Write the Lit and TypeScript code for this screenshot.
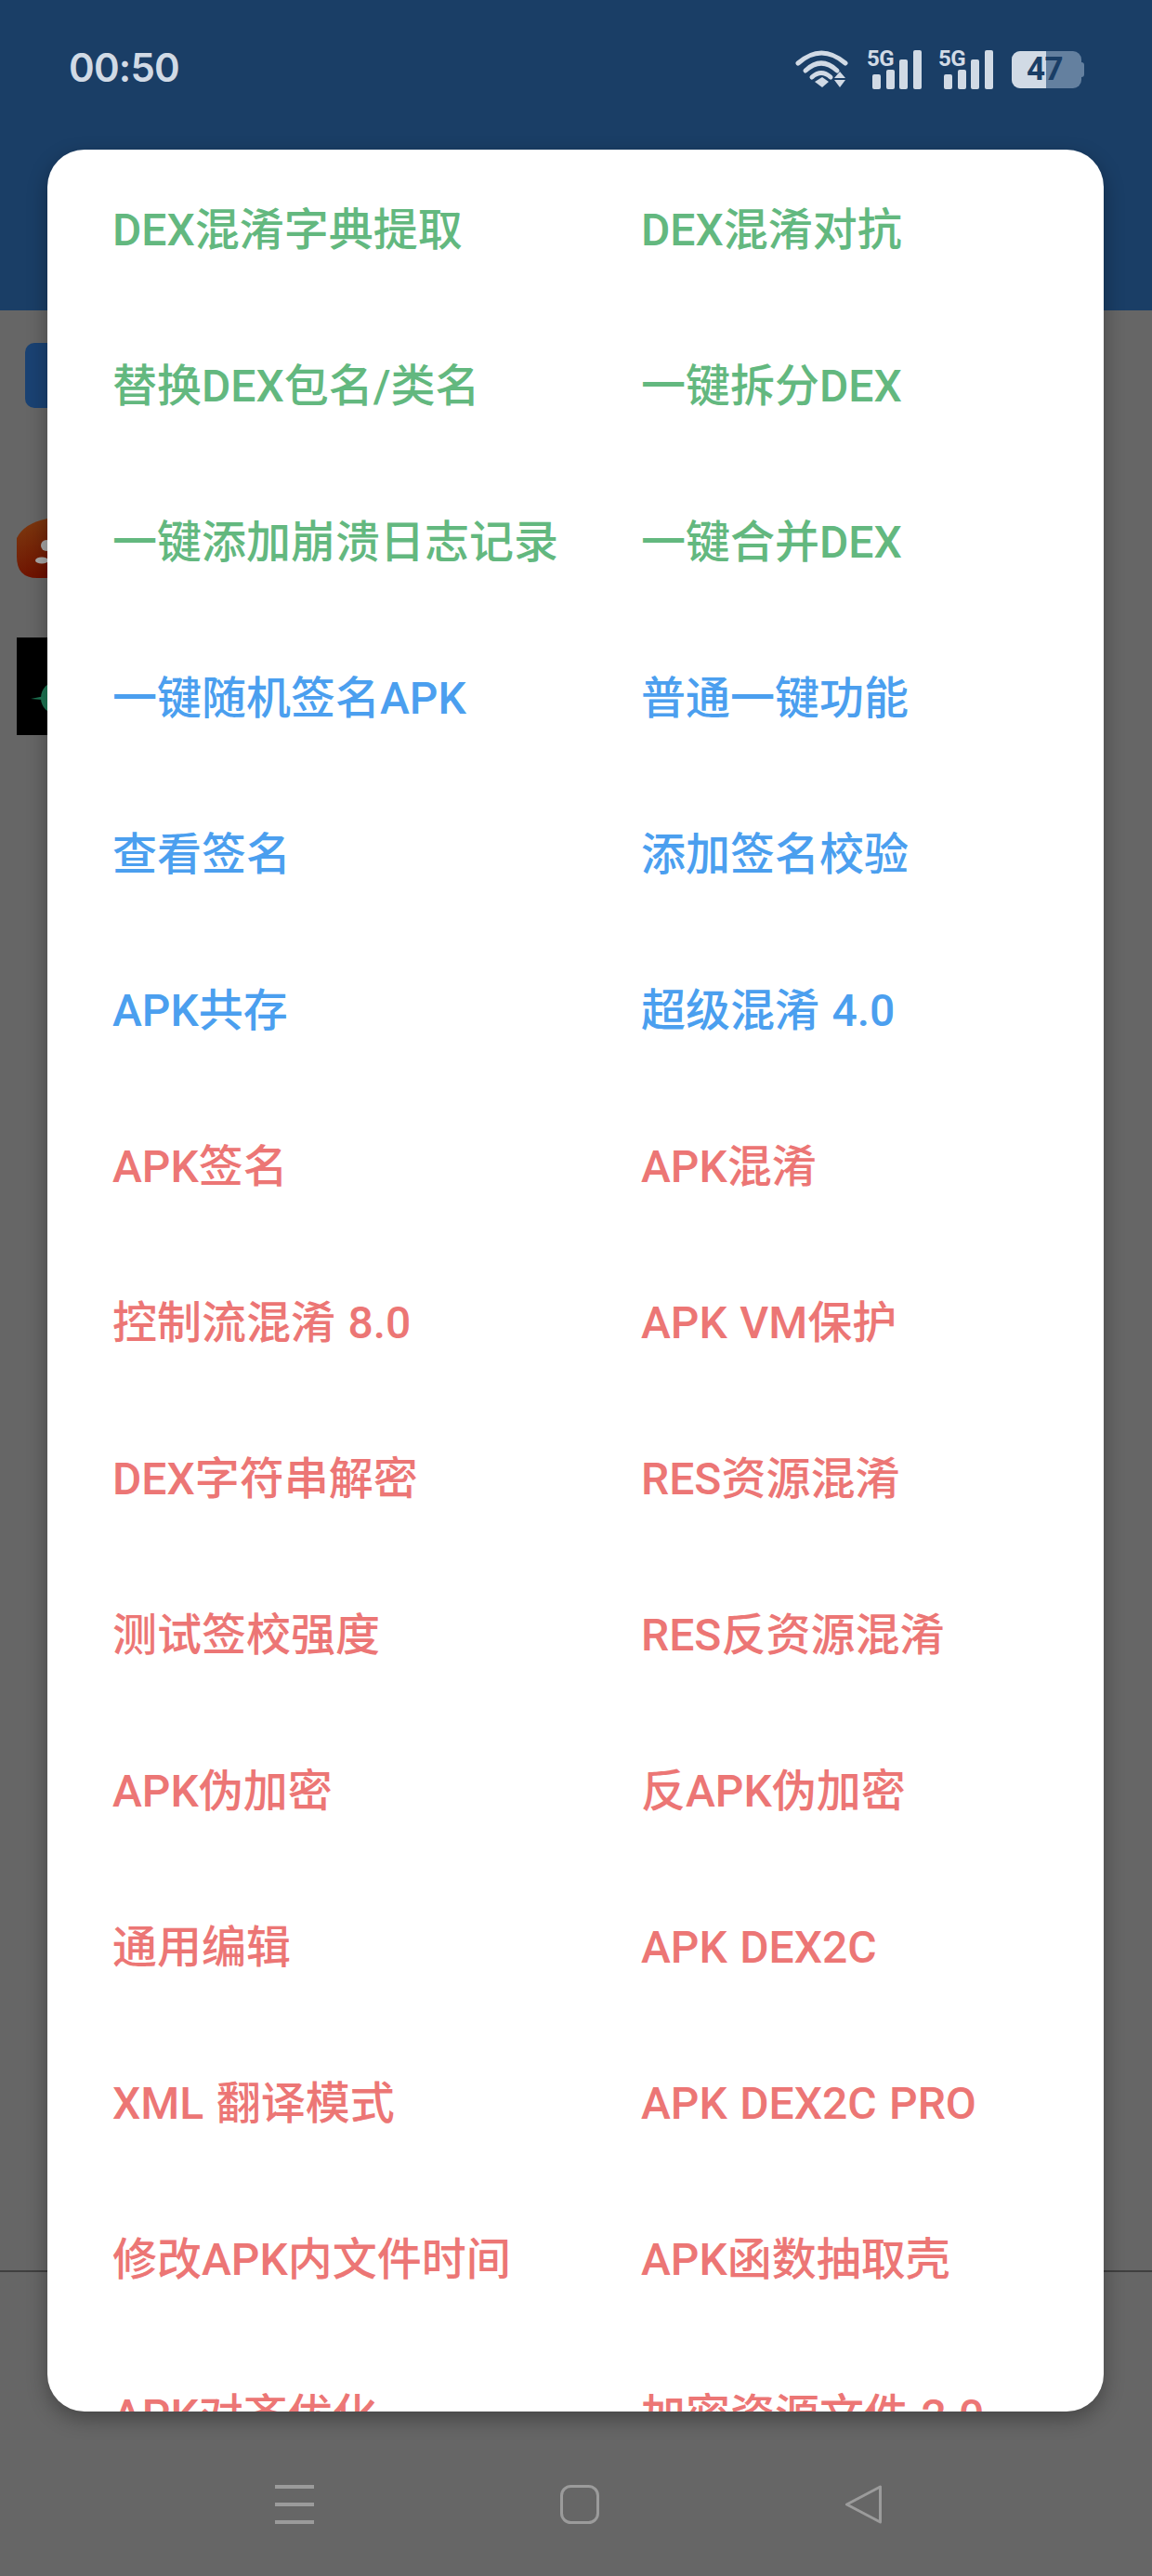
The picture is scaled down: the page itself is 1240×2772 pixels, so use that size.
import { LitElement, html, css } from "lit";
import { customElement } from "lit/decorators.js";
import { classMap } from "lit/directives/class-map.js";

type Tone = "g" | "b" | "r";
const items: [string, string, Tone][] = [
  ["DEX混淆字典提取", "DEX混淆对抗", "g"],
  ["替换DEX包名/类名", "一键拆分DEX", "g"],
  ["一键添加崩溃日志记录", "一键合并DEX", "g"],
  ["一键随机签名APK", "普通一键功能", "b"],
  ["查看签名", "添加签名校验", "b"],
  ["APK共存", "超级混淆 4.0", "b"],
  ["APK签名", "APK混淆", "r"],
  ["控制流混淆 8.0", "APK VM保护", "r"],
  ["DEX字符串解密", "RES资源混淆", "r"],
  ["测试签校强度", "RES反资源混淆", "r"],
  ["APK伪加密", "反APK伪加密", "r"],
  ["通用编辑", "APK DEX2C", "r"],
  ["XML 翻译模式", "APK DEX2C PRO", "r"],
  ["修改APK内文件时间", "APK函数抽取壳", "r"],
  ["APK对齐优化", "加密资源文件 2.0", "r"],
];

const signal = html`<div class="signal">
  <span class="five">5G</span>
  <i style="height:16px"></i><i style="height:21px"></i><i style="height:32px"></i><i style="height:42px"></i>
</div>`;

@customElement("app-root")
export class AppRoot extends LitElement {
  static styles = css`
    :host {
      display: block;
      position: relative;
      width: 1240px;
      height: 2772px;
      overflow: hidden;
      background: #666666;
      font-family: Roboto, "Noto Sans CJK SC", sans-serif;
    }
    .page { display: flex; flex-direction: column; height: 100%; }
    .header {
      height: 334px;
      flex: none;
      background: #1a3e66;
      box-sizing: border-box;
      padding: 52px 76px 0 74px;
      display: flex;
      justify-content: space-between;
      align-items: flex-start;
    }
    .time {
      font: 600 42px/44px Inter, Roboto, sans-serif;
      color: #d1dae5;
      letter-spacing: -0.8px;
      margin-top: -1px;
    }
    .status { display: flex; align-items: flex-start; gap: 14px; }
    .wifi { width: 60px; height: 44px; display: block; margin-right: 3px; }
    .signal {
      position: relative;
      width: 63px;
      height: 43px;
      display: flex;
      align-items: flex-end;
      gap: 5.6px;
      padding-left: 6px;
      box-sizing: border-box;
      margin-top: 1px;
    }
    .signal i { display: block; width: 9px; background: #d1dae5; border-radius: 2px; }
    .five {
      position: absolute;
      left: 0;
      top: -1px;
      font: 700 24px/22px Roboto, sans-serif;
      color: #d1dae5;
      letter-spacing: -0.4px;
    }
    .batt {
      position: relative;
      width: 75px;
      height: 40px;
      margin-top: 3px;
      margin-left: 2px;
      border-radius: 9px;
      background: #64809f;
    }
    .batt::before {
      content: "";
      position: absolute;
      left: 0; top: 0; bottom: 0;
      width: 37px;
      background: #d1dae5;
      border-radius: 9px 0 0 9px;
    }
    .batt::after {
      content: "";
      position: absolute;
      right: -3px; top: 12px;
      width: 3px; height: 16px;
      background: #64809f;
      border-radius: 0 3px 3px 0;
    }
    .batt span {
      position: absolute;
      left: 16px;
      top: 0;
      font: 700 35px/40px Roboto, sans-serif;
      color: #1a3e66;
      letter-spacing: -0.5px;
    }
    .body { flex: 1; position: relative; display: flex; flex-direction: column; align-items: flex-start; padding-left: 18px; }
    .chip {
      width: 90px; height: 70px; margin: 35px 0 0 9px;
      background: #1a4273; border-radius: 10px;
    }
    .ic1 { width: 60px; height: 66px; margin-top: 118px; display: block; }
    .ic2 { width: 100px; height: 105px; margin-top: 63px; background: #000; display: block; }
    .rule { position: absolute; left: 0; right: 0; top: 2109px; height: 1.5px; background: #3f3f3f; }
    .nav { position: absolute; left: 0; right: 0; top: 2674px; height: 42px; }
    .nav svg { position: absolute; top: 0; display: block; }
    .nav .n1 { left: 296px; }
    .nav .n2 { left: 603px; }
    .nav .n3 { left: 909px; }
    .card {
      position: absolute;
      left: 51px;
      top: 161px;
      width: 1137px;
      height: 2434px;
      background: #fff;
      border-radius: 40px;
      overflow: hidden;
      box-shadow: 0 8px 22px rgba(0, 0, 0, 0.32);
      box-sizing: border-box;
      padding: 3px 0 0 70px;
      display: grid;
      grid-template-columns: 569px 1fr;
      grid-auto-rows: 168px;
      align-items: center;
    }
    .cell {
      font-size: 48px;
      font-weight: 500;
      line-height: 60px;
      white-space: nowrap;
      word-spacing: 1.5px;
    }
    .g { color: #63b87f; }
    .b { color: #4b9fef; }
    .r { color: #ec7675; }
  `;

  render() {
    return html`
      <div class="page">
        <div class="header">
          <div class="time">00:50</div>
          <div class="status">
            <svg class="wifi" viewBox="0 0 60 44" fill="none" stroke="#d1dae5" stroke-width="5" stroke-linecap="round">
              <path d="M3 16 Q28 -6 54 16"/>
              <path d="M11 24 Q28 8 45 24"/>
              <path d="M18 31 Q28 22 38 31"/>
              <path d="M21 36 L29 31 L36 36 L29 42 Z" fill="#d1dae5" stroke="none"/>
              <path d="M48 25 L54 32 L42 32 Z M42 34 L54 34 L48 42 Z" fill="#d1dae5" stroke="none"/>
            </svg>
            ${signal}
            ${signal}
            <div class="batt"><span>47</span></div>
          </div>
        </div>
        <div class="body">
          <div class="chip"></div>
          <svg class="ic1" viewBox="0 0 60 66">
            <defs><linearGradient id="rg" x1="0" y1="0" x2="0.4" y2="1"><stop offset="0" stop-color="#7d3c10"/><stop offset="1" stop-color="#6e1000"/></linearGradient></defs>
            <path d="M0 22 Q8 6 33 1 L60 1 L60 65 L22 65 Q0 65 0 42 Z" fill="url(#rg)"/>
            <circle cx="32" cy="30" r="6" fill="#a8a8a8"/>
            <ellipse cx="27" cy="46" rx="7" ry="3.6" fill="#a8a8a8"/>
          </svg>
          <svg class="ic2" viewBox="0 0 100 105">
            <circle cx="44" cy="65" r="18" fill="#1d7553"/>
            <path d="M15 66 L40 61 L40 68 Z" fill="#1d7553"/>
          </svg>
          <div class="rule"></div>
        </div>
      </div>
      <div class="nav">
        <svg class="n1" width="42" height="42" viewBox="0 0 42 42" fill="#9b9b9b">
          <rect x="0" y="0" width="42" height="4"/><rect x="0" y="19" width="42" height="4"/><rect x="0" y="38" width="42" height="4"/>
        </svg>
        <svg class="n2" width="42" height="42" viewBox="0 0 42 42" fill="none" stroke="#9b9b9b" stroke-width="3">
          <rect x="1.5" y="1.5" width="39" height="39" rx="10"/>
        </svg>
        <svg class="n3" width="42" height="42" viewBox="0 0 42 42" fill="none" stroke="#9b9b9b" stroke-width="3" stroke-linejoin="round">
          <path d="M38.5 2 L38.5 40 L2.5 21 Z"/>
        </svg>
      </div>
      <div class="card">
        ${items.map(
          ([a, b, t]) => html`
            <div class=${classMap({ cell: true, [t]: true })}>${a}</div>
            <div class=${classMap({ cell: true, [t]: true })}>${b}</div>
          `
        )}
      </div>
    `;
  }
}
